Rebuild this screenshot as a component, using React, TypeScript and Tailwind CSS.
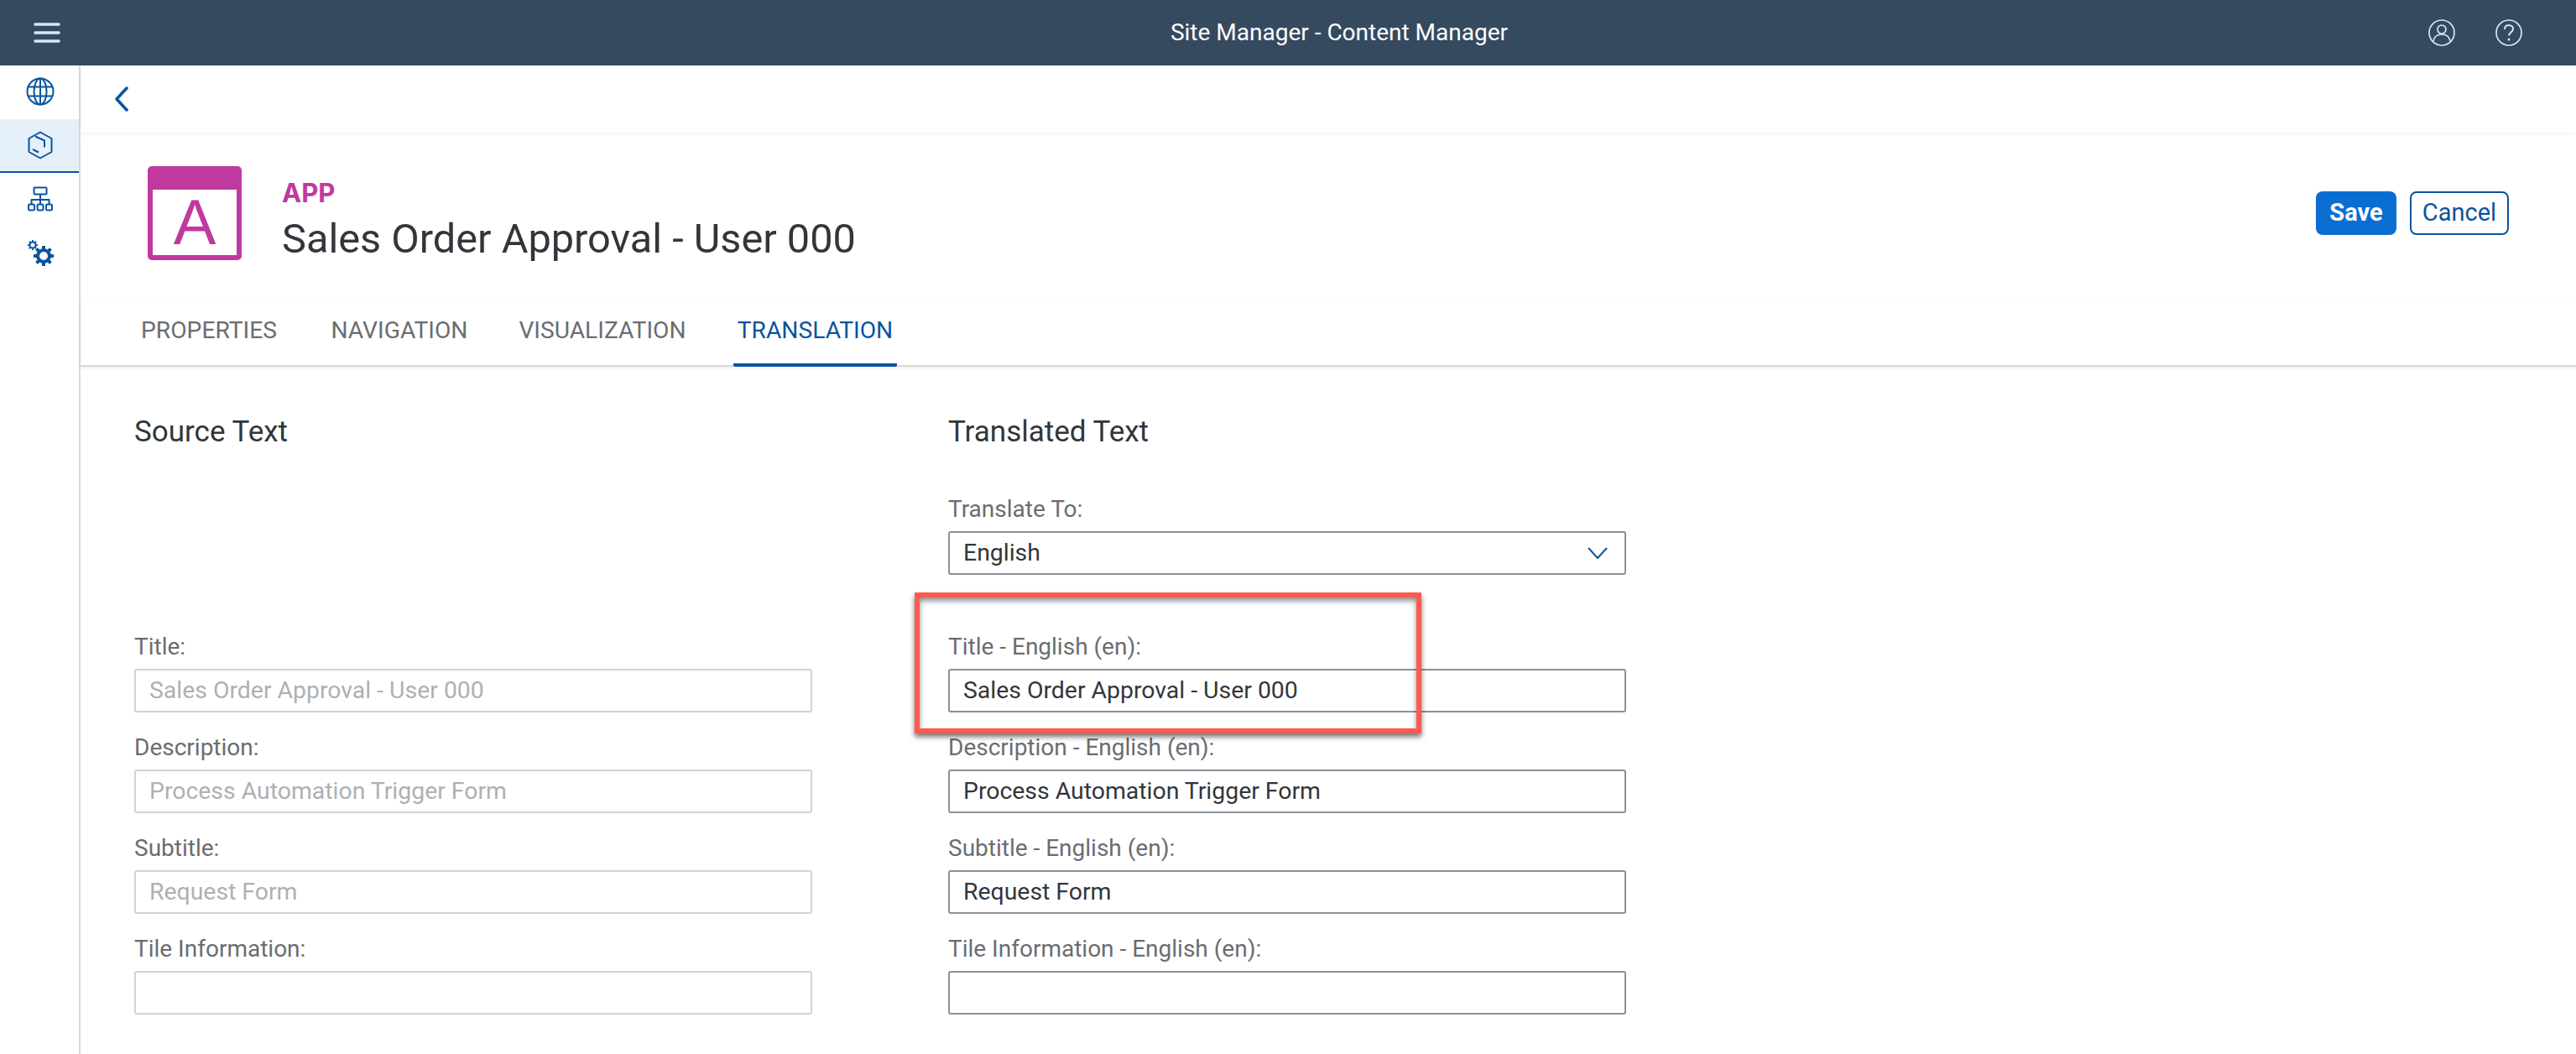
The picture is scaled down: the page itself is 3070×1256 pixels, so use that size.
import React from "react";

const font = { fontFamily: 'Roboto, sans-serif' };

function GlobeIcon() {
  return (
    <svg width="34" height="34" viewBox="0 0 34 34" fill="none" stroke="#0854a0" strokeWidth="2">
      <circle cx="17" cy="17" r="15.5" />
      <ellipse cx="17" cy="17" rx="7.5" ry="15.5" />
      <path d="M3 11.5h28M3 22.5h28M17 1.5v31" />
    </svg>
  );
}

function BoxIcon() {
  return (
    <svg width="30" height="34" viewBox="0 0 30 34" fill="none" stroke="#0854a0" strokeWidth="2" strokeLinejoin="round">
      <path d="M15 1.5 28.5 9v16L15 32.5 1.5 25V9z" />
      <path d="M9 6.500 20 11.500v8M6 22l7 3.500" />
    </svg>
  );
}

function TreeIcon() {
  return (
    <svg width="30" height="30" viewBox="0 0 30 30" fill="none" stroke="#0854a0" strokeWidth="2" strokeLinejoin="round">
      <rect x="7.5" y="1.5" width="15" height="8" rx="1" />
      <rect x="1" y="21.5" width="7" height="7" rx="1.5" />
      <rect x="11.5" y="21.5" width="7" height="7" rx="1.5" />
      <rect x="22" y="21.5" width="7" height="7" rx="1.5" />
      <path d="M15 9.5v12M4.500 21.500v-5.500h21v5.500" />
    </svg>
  );
}

function GearShape({ cx, cy, r, hole, tooth }: { cx: number; cy: number; r: number; hole: number; tooth: number }) {
  const angles = [0, 45, 90, 135, 180, 225, 270, 315];
  return (
    <g>
      {angles.map((a) => (
        <rect
          key={a}
          x={cx - tooth / 2}
          y={cy - r - tooth * 0.75}
          width={tooth}
          height={tooth}
          rx="0.6"
          fill="#0854a0"
          transform={`rotate(${a} ${cx} ${cy})`}
        />
      ))}
      <circle cx={cx} cy={cy} r={r - (r - hole) / 2} fill="none" stroke="#0854a0" strokeWidth={r - hole} />
    </g>
  );
}

function GearsIcon() {
  return (
    <svg width="34" height="34" viewBox="0 0 34 34">
      <GearShape cx={8} cy={8} r={4.500} hole={2.500} tooth={2} />
      <GearShape cx={21} cy={21} r={9} hole={5} tooth={4} />
    </svg>
  );
}

function AppIcon() {
  return (
    <div className="w-[112px] h-[112px] shrink-0 rounded-[5px] bg-[#c0399f] px-[6px] pb-[6px] pt-[28px]">
      <div className="w-full h-full bg-white flex items-center justify-center">
        <span className="text-[76px] leading-none text-[#c0399f]" style={{ fontFamily: '"Liberation Sans", sans-serif' }}>A</span>
      </div>
    </div>
  );
}

function Field({ label, value, muted }: { label: string; value?: string; muted?: boolean }) {
  return (
    <div className="w-[808px] h-[120px] flex flex-col justify-end">
      <div className="text-[28px] leading-[36px] text-[#6a6d70] mb-[8px]">{label}</div>
      <div
        className={`h-[52px] border-2 rounded-[3px] px-[16px] flex items-center text-[28.4px] ${
          muted ? "border-[#ced3d8] text-[#aeb0b2]" : "border-[#89919a] text-[#32363a]"
        }`}
      >
        {value}
      </div>
    </div>
  );
}

const tabs = [
  { label: "PROPERTIES", width: "w-[178px]" },
  { label: "NAVIGATION", width: "w-[172px]" },
  { label: "VISUALIZATION", width: "w-[208px]" },
];

export default function App() {
  return (
    <div className="relative w-[3070px] h-[1256px] overflow-hidden bg-white" style={font}>
      {/* shell bar */}
      <div className="h-[78px] bg-[#354a5f] flex items-center">
        <div className="w-[96px] pl-[40px]">
          <svg width="32" height="24" viewBox="0 0 32 24" stroke="#d1e8ff" strokeWidth="3.500" strokeLinecap="round" className="block">
            <path d="M2 2h28M2 12h28M2 22h28" />
          </svg>
        </div>
        <div className="flex-1 text-center text-[28px] text-white pl-[202px]">Site Manager - Content Manager</div>
        <div className="flex items-center gap-[48px] pr-[64px]">
          <svg width="32" height="32" viewBox="0 0 32 32" fill="none" stroke="#d1e8ff" strokeWidth="1.700">
            <circle cx="16" cy="16" r="15" />
            <circle cx="16" cy="12" r="5" />
            <path d="M6 26c1-6 5-8 10-8s9 2 10 8" />
          </svg>
          <svg width="32" height="32" viewBox="0 0 32 32" fill="none" stroke="#d1e8ff" strokeWidth="1.700">
            <circle cx="16" cy="16" r="15" />
            <path d="M11 12c0-3 2-5 5-5s5 2 5 4.500c0 4-5 4-5 8" strokeWidth="2" />
            <circle cx="16" cy="24" r="1.500" fill="#d1e8ff" stroke="none" />
          </svg>
        </div>
      </div>

      <div className="flex h-[1178px]">
        {/* side nav */}
        <div className="w-[96px] shrink-0 border-r-2 border-[#d9d9d9]">
          <div className="h-[64px] pb-[2px] flex items-center justify-center pl-[2px]"><GlobeIcon /></div>
          <div className="h-[64px] flex items-center justify-center pl-[2px] bg-[#e5f0fa] border-b-2 border-[#0854a0]"><BoxIcon /></div>
          <div className="h-[62px] flex items-center justify-center pl-[2px]"><TreeIcon /></div>
          <div className="h-[66px] flex items-center justify-center pl-[2px]"><GearsIcon /></div>
        </div>

        <div className="flex-1 flex flex-col">
          {/* back bar */}
          <div className="h-[80px] flex items-center pl-[40px] shadow-[0_2px_4px_rgba(0,0,0,0.05)]">
            <svg width="18" height="30" viewBox="0 0 18 30" fill="none" stroke="#0854a0" strokeWidth="3.500" strokeLinecap="round" strokeLinejoin="round">
              <path d="M15 2 3 15l12 13" />
            </svg>
          </div>

          {/* object header */}
          <div className="flex items-start pl-[80px] pr-[80px] pt-[40px]">
            <AppIcon />
            <div className="ml-[48px] flex-1 pt-[14px]">
              <div className="text-[31px] leading-[36px] font-bold text-[#c0399f]" style={{ fontFamily: 'Inter, sans-serif' }}>APP</div>
              <div className="text-[48.7px] leading-[60px] text-[#32363a] mt-[7px]">Sales Order Approval - User 000</div>
            </div>
            <div className="flex gap-[16px] pt-[30px]">
              <div className="w-[96px] h-[52px] rounded-[8px] bg-[#0a6ed1] text-white text-[29px] font-bold flex items-center justify-center">Save</div>
              <div className="w-[118px] h-[52px] rounded-[8px] border-2 border-[#0854a0] text-[#0854a0] text-[29px] flex items-center justify-center">Cancel</div>
            </div>
          </div>

          {/* tabs */}
          <div className="h-[80px] mt-[42px] flex items-end gap-[52px] pl-[64px] border-b-2 border-[#d9d9d9] shadow-[0_2px_4px_rgba(0,0,0,0.08)]">
            {tabs.map((t) => (
              <div key={t.label} className={`${t.width} h-[78px] pb-[4px] flex items-center justify-center text-[28.2px] text-[#6a6d70]`}>{t.label}</div>
            ))}
            <div className="w-[195px] h-[80px] -mb-[2px] pb-[2px] flex items-center justify-center text-[28.2px] text-[#0854a0] border-b-4 border-[#0854a0] rounded-b-[2px]">TRANSLATION</div>
          </div>

          {/* form */}
          <div className="flex gap-[162px] pl-[64px] pt-[54px]">
            <div className="flex flex-col">
              <div className="h-[48px] flex items-center text-[35px] text-[#32363a]">Source Text</div>
              <div className="h-[190px]" />
              <Field label="Title:" value="Sales Order Approval - User 000" muted />
              <Field label="Description:" value="Process Automation Trigger Form" muted />
              <Field label="Subtitle:" value="Request Form" muted />
              <Field label="Tile Information:" muted />
            </div>
            <div className="flex flex-col">
              <div className="h-[48px] flex items-center text-[35px] text-[#32363a]">Translated Text</div>
              <div className="h-[26px]" />
              <div className="w-[808px] h-[120px] flex flex-col justify-end">
                <div className="text-[28px] leading-[36px] text-[#6a6d70] mb-[8px]">Translate To:</div>
                <div className="h-[52px] border-2 border-[#89919a] rounded-[3px] pl-[16px] pr-[20px] flex items-center justify-between text-[28.4px] text-[#32363a]">
                  English
                  <svg width="24" height="14" viewBox="0 0 24 14" fill="none" stroke="#0854a0" strokeWidth="2">
                    <path d="M1 1 12 13 23 1" />
                  </svg>
                </div>
              </div>
              <div className="h-[44px]" />
              <Field label="Title - English (en):" value="Sales Order Approval - User 000" />
              <Field label="Description - English (en):" value="Process Automation Trigger Form" />
              <Field label="Subtitle - English (en):" value="Request Form" />
              <Field label="Tile Information - English (en):" />
            </div>
          </div>
        </div>
      </div>

      {/* red annotation box */}
      <div className="absolute left-[1090px] top-[706px] w-[604px] h-[168px] border-[6px] border-[#ff5a4f] shadow-[0_4px_6px_rgba(0,0,0,0.55),inset_0_4px_6px_rgba(0,0,0,0.45)]" />
    </div>
  );
}
